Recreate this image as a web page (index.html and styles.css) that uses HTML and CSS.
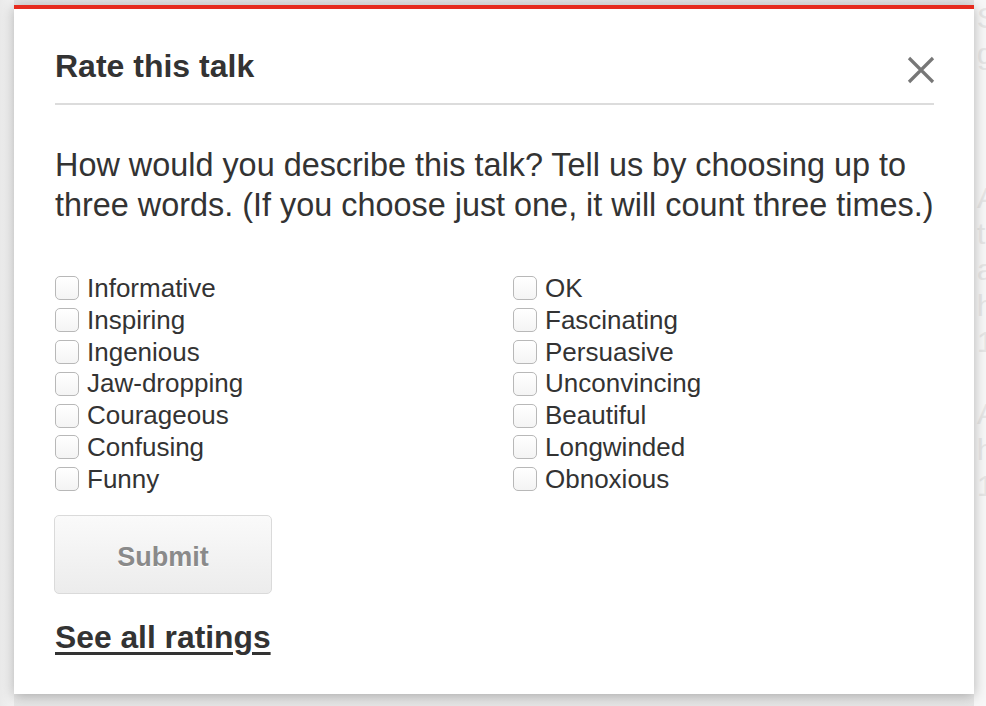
FILE: index.html
```html
<!DOCTYPE html>
<html>
<head>
<meta charset="utf-8">
<link rel="stylesheet" href="styles.css">
</head>
<body>
<div class="page">
  <div class="side-left"></div>
  <div class="modal">
    <div class="modal-head">
      <h2 class="title">Rate this talk</h2>
      <button class="close" aria-label="Close">
        <svg width="28" height="28" viewBox="0 0 28 28"><path d="M2 2 L26 26 M26 2 L2 26" stroke="#777" stroke-width="3.2" fill="none"/></svg>
      </button>
    </div>
    <div class="modal-body">
      <p class="intro">How would you describe this talk? Tell us by choosing up to three words. (If you choose just one, it will count three times.)</p>
      <div class="options">
        <div class="col">
          <label class="opt"><input type="checkbox"><span>Informative</span></label>
          <label class="opt"><input type="checkbox"><span>Inspiring</span></label>
          <label class="opt"><input type="checkbox"><span>Ingenious</span></label>
          <label class="opt"><input type="checkbox"><span>Jaw-dropping</span></label>
          <label class="opt"><input type="checkbox"><span>Courageous</span></label>
          <label class="opt"><input type="checkbox"><span>Confusing</span></label>
          <label class="opt"><input type="checkbox"><span>Funny</span></label>
        </div>
        <div class="col">
          <label class="opt"><input type="checkbox"><span>OK</span></label>
          <label class="opt"><input type="checkbox"><span>Fascinating</span></label>
          <label class="opt"><input type="checkbox"><span>Persuasive</span></label>
          <label class="opt"><input type="checkbox"><span>Unconvincing</span></label>
          <label class="opt"><input type="checkbox"><span>Beautiful</span></label>
          <label class="opt"><input type="checkbox"><span>Longwinded</span></label>
          <label class="opt"><input type="checkbox"><span>Obnoxious</span></label>
        </div>
      </div>
      <button class="submit" disabled>Submit</button>
      <a class="all" href="#">See all ratings</a>
    </div>
  </div>
  <div class="side-right">
    <div class="ghost">S</div>
    <div class="ghost">g</div>
    <div class="ghost"> </div>
    <div class="ghost"> </div>
    <div class="ghost"> </div>
    <div class="ghost">A</div>
    <div class="ghost">t</div>
    <div class="ghost">a</div>
    <div class="ghost">h</div>
    <div class="ghost">1</div>
    <div class="ghost"> </div>
    <div class="ghost">A</div>
    <div class="ghost">h</div>
    <div class="ghost">1</div>
  </div>
</div>
</body>
</html>
```

FILE: styles.css
```css
* { box-sizing: border-box; }
html, body {
  margin: 0;
  padding: 0;
}
body {
  width: 986px;
  height: 706px;
  overflow: hidden;
  background: #ececec;
  font-family: "Liberation Sans", Arial, sans-serif;
  color: #333;
}
.page {
  display: flex;
  height: 706px;
  background: linear-gradient(to bottom, #e4e4e4 0, #f2f2f2 40px, #f4f4f4 640px, #e6e6e6 706px);
}
.side-left {
  width: 14px;
  flex: none;
  background: linear-gradient(to right, #eaeaea, #f3f3f3);
}
.modal {
  width: 960px;
  height: 689px;
  flex: none;
  margin-top: 5px;
  background: #fff;
  border-top: 4px solid #e62b1e;
  box-shadow: 0 2px 12px rgba(0, 0, 0, 0.28);
  position: relative;
  z-index: 1;
  padding: 0 40px 0 41px;
}
.modal-head {
  display: flex;
  justify-content: space-between;
  align-items: flex-start;
  padding-top: 38px;
  padding-bottom: 18px;
  border-bottom: 2px solid #dcdcdc;
}
.title {
  margin: 0;
  font-size: 32px;
  line-height: 38px;
  font-weight: bold;
  color: #333;
}
.close {
  border: 0;
  background: none;
  padding: 0;
  margin: 9px -1px 0 0;
  width: 28px;
  height: 28px;
  cursor: pointer;
}
.close svg { display: block; }
.intro {
  margin: 40px 0 0;
  font-size: 32.4px;
  line-height: 40px;
  color: #333;
  width: 890px;
}
.options {
  display: grid;
  grid-template-columns: 458px 1fr;
  margin-top: 47px;
}
.col {
  display: flex;
  flex-direction: column;
}
.opt {
  display: flex;
  align-items: center;
  height: 31.8px;
  font-size: 26px;
  line-height: 32px;
  color: #333;
}
.opt input {
  appearance: none;
  -webkit-appearance: none;
  width: 24px;
  height: 24px;
  margin: 1px 8px 0 0;
  border: 1px solid #b8b8b8;
  border-radius: 5px;
  background: linear-gradient(to bottom, #ffffff, #f4f4f4);
  flex: none;
}
.submit {
  display: block;
  margin-top: 20px;
  margin-left: -1px;
  width: 218px;
  height: 79px;
  border: 1px solid #dadada;
  border-radius: 5px;
  background: linear-gradient(to bottom, #fafafa, #ececec);
  font-family: "Liberation Sans", Arial, sans-serif;
  font-size: 27px;
  font-weight: bold;
  color: #8a8a8a;
  text-shadow: 0 1px 0 #fff;
  padding: 6px 0 0;
}
.all {
  display: inline-block;
  margin-top: 25px;
  font-size: 31.8px;
  line-height: 36px;
  font-weight: bold;
  color: #333;
  text-decoration: underline;
  text-decoration-thickness: 3px;
  text-underline-offset: 4px;
}
.side-right {
  width: 12px;
  flex: none;
  overflow: hidden;
  background: #f7f7f7;
}
.ghost {
  white-space: pre;
  font-size: 30px;
  line-height: 36px;
  color: #e6e6e6;
  padding-left: 3px;
  height: 36px;
}
```
